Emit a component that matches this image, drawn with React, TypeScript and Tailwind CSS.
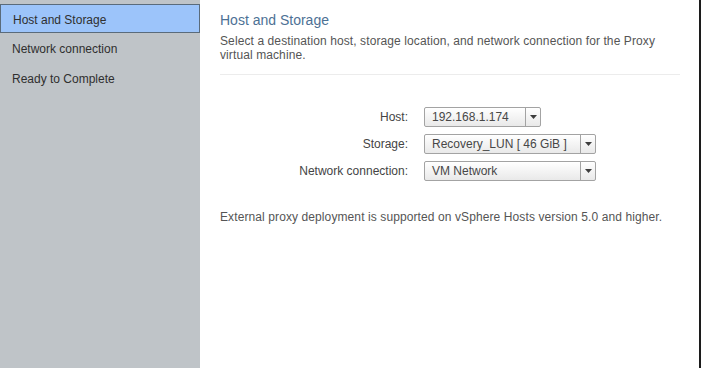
import React from 'react';

const steps = ['Host and Storage', 'Network connection', 'Ready to Complete'];

function Combo({ value, width }: { value: string; width: string }) {
  return (
    <div
      className={`${width} h-[20px] flex border border-[#a3a3a3] rounded-[2px] bg-gradient-to-b from-white to-[#e9e9e9] shadow-[inset_0_1px_0_#ffffff]`}
    >
      <div className="flex-1 flex items-center pl-[7px] text-[12px] text-[#474747] whitespace-nowrap overflow-hidden">
        {value}
      </div>
      <div className="w-[15px] flex items-center justify-center border-l border-[#a3a3a3]">
        <svg width="7" height="4" viewBox="0 0 7 4">
          <path d="M0 0 L7 0 L3.5 4 Z" fill="#3d3d3d" />
        </svg>
      </div>
    </div>
  );
}

export default function App() {
  return (
    <div className="w-[701px] h-[368px] flex bg-white font-['Liberation_Sans',Arial,sans-serif] overflow-hidden">
      {/* Wizard steps */}
      <aside className="w-[200px] shrink-0 bg-[#bfc4c8] pt-[4px] text-[12px] text-[#2f2f2f]">
        {steps.map((s, i) =>
          i === 0 ? (
            <div
              key={s}
              className="h-[29px] flex items-center pl-[12px] pt-[2px] bg-[#9cc4fa] border border-[#5a6b7b]"
            >
              {s}
            </div>
          ) : (
            <div key={s} className="h-[30px] flex items-center pl-[12px] pt-[2px]">
              {s}
            </div>
          )
        )}
      </aside>

      {/* Page */}
      <main className="flex-1 pl-[20px] pr-[19px] pt-[12px]">
        <h1 className="text-[14px] leading-[16px] text-[#4d7195]">Host and Storage</h1>
        <p className="mt-[6px] text-[12px] leading-[14px] tracking-[0.1px] text-[#555555] pr-[10px]">
          Select a destination host, storage location, and network connection for the Proxy
          virtual machine.
        </p>
        <div className="mt-[12px] h-px bg-[#ececec]" />

        <div className="mt-[32px] grid grid-cols-[188px_auto] gap-x-[16px] gap-y-[7px] items-center text-[12px] text-[#444444]">
          <span className="text-right">Host:</span>
          <Combo value="192.168.1.174" width="w-[117px]" />
          <span className="text-right">Storage:</span>
          <Combo value="Recovery_LUN [ 46 GiB ]" width="w-[172px]" />
          <span className="text-right">Network connection:</span>
          <Combo value="VM Network" width="w-[172px]" />
        </div>

        <p className="mt-[29px] text-[12px] leading-[14px] tracking-[0.1px] text-[#555555]">
          External proxy deployment is supported on vSphere Hosts version 5.0 and higher.
        </p>
      </main>

      <div className="w-[2px] shrink-0 bg-[#1c1c1c]" />
    </div>
  );
}
